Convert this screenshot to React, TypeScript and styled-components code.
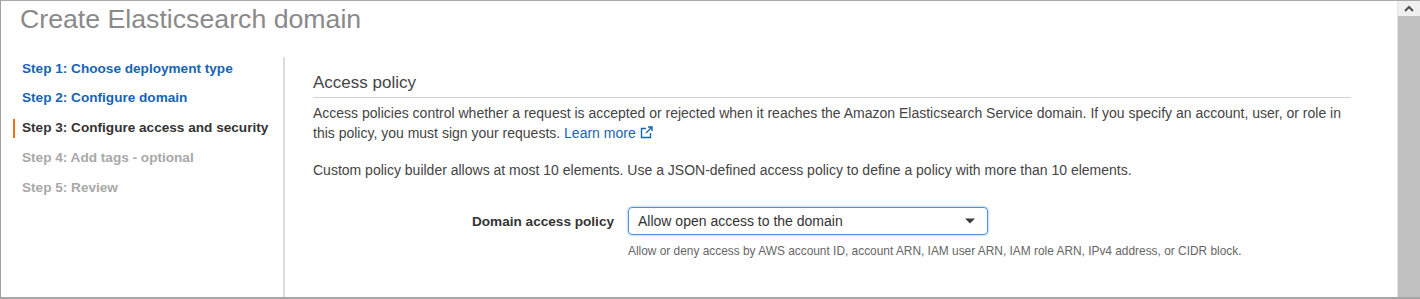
import styled, { createGlobalStyle } from "styled-components";

const GlobalStyle = createGlobalStyle`
  html, body { margin: 0; padding: 0; background: #fff; overflow: hidden; }
  body { font-family: "Liberation Sans", Arial, sans-serif; }
  * { box-sizing: border-box; }
`;

type StepState = "done" | "active" | "todo";

const steps: { label: string; state: StepState }[] = [
  { label: "Step 1: Choose deployment type", state: "done" },
  { label: "Step 2: Configure domain", state: "done" },
  { label: "Step 3: Configure access and security", state: "active" },
  { label: "Step 4: Add tags - optional", state: "todo" },
  { label: "Step 5: Review", state: "todo" },
];

const stepColors: Record<StepState, string> = {
  done: "#1664b5",
  active: "#333333",
  todo: "#a8a8a8",
};

const App = () => {
  return (
    <>
      <GlobalStyle />
      <Window>
        <Page>
          <Title>Create Elasticsearch domain</Title>
          <Body>
            <Sidebar>
              {steps.map((s) => (
                <Step key={s.label} $state={s.state}>
                  {s.label}
                </Step>
              ))}
            </Sidebar>
            <Content>
              <SectionHeading>Access policy</SectionHeading>
              <Text>
                Access policies control whether a request is accepted or rejected when it reaches the Amazon
                Elasticsearch Service domain. If you specify an account, user, or role in this policy, you must sign
                your requests.{" "}
                <Link>
                  Learn more
                  <ExternalIcon />
                </Link>
              </Text>
              <Text $gap={17}>
                Custom policy builder allows at most 10 elements. Use a JSON-defined access policy to define a policy
                with more than 10 elements.
              </Text>
              <FieldRow>
                <FieldLabel>Domain access policy</FieldLabel>
                <SelectBox>
                  <span>Allow open access to the domain</span>
                  <svg width="10" height="6" viewBox="0 0 10 6">
                    <path d="M0 0.5 H10 L5 5.5 Z" fill="#3d3d3d" />
                  </svg>
                </SelectBox>
                <span />
                <Hint>
                  Allow or deny access by AWS account ID, account ARN, IAM user ARN, IAM role ARN, IPv4 address, or
                  CIDR block.
                </Hint>
              </FieldRow>
            </Content>
          </Body>
        </Page>
        <Scrollbar>
          <ScrollArrow>
            <svg width="10" height="7" viewBox="0 0 10 7">
              <path d="M1 6 L5 2 L9 6" fill="none" stroke="#505050" strokeWidth="2" />
            </svg>
          </ScrollArrow>
          <ScrollThumb />
        </Scrollbar>
      </Window>
    </>
  );
};

const ExternalIcon = () => (
  <IconWrap>
    <svg width="13" height="13" viewBox="0 0 13 13">
      <path d="M6 2.5 H1.5 V11.5 H10.5 V7" fill="none" stroke="#1664b5" strokeWidth="1.4" />
      <path d="M8 1 H12 V5 M12 1 L6 7" fill="none" stroke="#1664b5" strokeWidth="1.4" />
    </svg>
  </IconWrap>
);

const Window = styled.div`
  width: 1420px;
  height: 299px;
  display: flex;
  border-top: 1px solid #a9a9a9;
  border-left: 1px solid #a0a0a0;
  border-bottom: 2px solid #a6a6a6;
`;

const Page = styled.div`
  flex: 1;
  display: flex;
  flex-direction: column;
  min-width: 0;
`;

const Title = styled.h1`
  margin: 0;
  height: 51px;
  padding: 2px 0 0 19px;
  font-size: 26.7px;
  line-height: 32px;
  font-weight: normal;
  color: #8a8a8a;
`;

const Body = styled.div`
  flex: 1;
  display: flex;
`;

const Sidebar = styled.ul`
  list-style: none;
  margin: 0;
  padding: 1.5px 0 0;
  width: 282px;
  flex-shrink: 0;
`;

const Step = styled.li<{ $state: StepState }>`
  position: relative;
  padding-left: 21px;
  font-size: 13.6px;
  font-weight: bold;
  line-height: 29.75px;
  color: ${({ $state }) => stepColors[$state]};

  &::before {
    content: "";
    display: ${({ $state }) => ($state === "active" ? "block" : "none")};
    position: absolute;
    left: 12px;
    top: 5.5px;
    width: 2px;
    height: 19px;
    background: #ec7211;
  }
`;

const Content = styled.div`
  flex: 1;
  margin-top: 5px;
  border-left: 2px solid #dcdcdc;
  padding: 16px 46px 0 28px;
  color: #444;
`;

const SectionHeading = styled.h2`
  margin: 0;
  font-size: 17px;
  font-weight: normal;
  line-height: 20px;
  padding-bottom: 4px;
  border-bottom: 1px solid #cfcfcf;
  color: #444;
`;

const Text = styled.p<{ $gap?: number }>`
  margin: ${({ $gap }) => $gap ?? 5}px 0 0;
  font-size: 14px;
  line-height: 20px;
`;

const Link = styled.a`
  color: #1664b5;
  text-decoration: none;
  cursor: pointer;
  white-space: nowrap;
`;

const IconWrap = styled.span`
  display: inline-block;
  margin-left: 4px;
  vertical-align: -1px;
  line-height: 0;
`;

const FieldRow = styled.div`
  display: grid;
  grid-template-columns: 301px 360px;
  column-gap: 14px;
  align-items: center;
  margin-top: 27px;
`;

const FieldLabel = styled.label`
  text-align: right;
  font-size: 13.6px;
  font-weight: bold;
  color: #333;
`;

const SelectBox = styled.div`
  height: 28px;
  display: flex;
  align-items: center;
  justify-content: space-between;
  padding: 0 12px 0 9px;
  border: 1px solid #4a8fe0;
  border-radius: 4px;
  box-shadow: 0 0 2px 1px rgba(74, 143, 224, 0.3);
  font-size: 14px;
  color: #333;
`;

const Hint = styled.div`
  margin-top: 8px;
  font-size: 11.9px;
  line-height: 16px;
  color: #666;
  white-space: nowrap;
`;

const Scrollbar = styled.div`
  width: 23px;
  flex-shrink: 0;
  display: flex;
  flex-direction: column;
  border-left: 1px solid #e6e6e6;
`;

const ScrollArrow = styled.div`
  height: 15px;
  background: #f0f0f0;
  display: flex;
  align-items: center;
  justify-content: center;
`;

const ScrollThumb = styled.div`
  flex: 1;
  background: #c1c1c1;
`;

export default App;
